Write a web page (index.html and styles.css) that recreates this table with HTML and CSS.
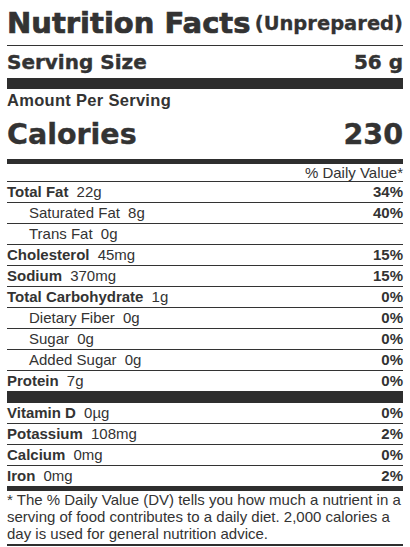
FILE: index.html
```html
<!DOCTYPE html>
<html lang="en">
    <head>
        <meta charset="UTF-8" />
        <title>Nutrition Facts</title>
        <link rel="stylesheet" href="styles.css">
    </head>

    <body>
        <div class="label">
            <header class="title">
                <h1>Nutrition Facts</h1>
                <span class="note">(Unprepared)</span>
            </header>

            <div class="serving">
                <span>Serving Size</span>
                <span>56 g</span>
            </div>

            <div class="amount">Amount Per Serving</div>
            <div class="calories">
                <span>Calories</span>
                <span>230</span>
            </div>

            <div class="dv-head">% Daily Value*</div>

            <div class="row">
                <span><b>Total Fat</b> 22g</span>
                <b>34%</b>
            </div>
            <div class="row sub">
                <span>Saturated Fat <span class="qty">8g</span></span>
                <b>40%</b>
            </div>
            <div class="row sub">
                <span>Trans Fat <span class="qty">0g</span></span>
            </div>
            <div class="row">
                <span><b>Cholesterol</b> 45mg</span>
                <b>15%</b>
            </div>
            <div class="row">
                <span><b>Sodium</b> 370mg</span>
                <b>15%</b>
            </div>
            <div class="row">
                <span><b>Total Carbohydrate</b> 1g</span>
                <b>0%</b>
            </div>
            <div class="row sub">
                <span>Dietary Fiber <span class="qty">0g</span></span>
                <b>0%</b>
            </div>
            <div class="row sub">
                <span>Sugar <span class="qty">0g</span></span>
                <b>0%</b>
            </div>
            <div class="row sub">
                <span>Added Sugar <span class="qty">0g</span></span>
                <b>0%</b>
            </div>
            <div class="row row-thick">
                <span><b>Protein</b> 7g</span>
                <b>0%</b>
            </div>

            <div class="row">
                <span><b>Vitamin D</b> 0µg</span>
                <b>0%</b>
            </div>
            <div class="row">
                <span><b>Potassium</b> 108mg</span>
                <b>2%</b>
            </div>
            <div class="row">
                <span><b>Calcium</b> 0mg</span>
                <b>0%</b>
            </div>
            <div class="row row-medium">
                <span><b>Iron</b> 0mg</span>
                <b>2%</b>
            </div>

            <p class="footnote">
                * The % Daily Value (DV) tells you how much a nutrient in a
                serving of food contributes to a daily diet. 2,000 calories a
                day is used for general nutrition advice.
            </p>
        </div>
    </body>
</html>
```

FILE: styles.css
```css
body {
    margin: 0;
    background-color: #fff;
    color: #333;
    font-family: "Liberation Sans", Arial, sans-serif;
    font-size: 15px;
}

.label {
    width: 396px;
    margin-left: 7px;
}

.title {
    display: flex;
    justify-content: space-between;
    align-items: center;
    padding: 6px 0 5px;
    border-bottom: 1px solid #333;
}

.title h1 {
    margin: 0;
    font-family: "DejaVu Sans", sans-serif;
    font-size: 29px;
    font-weight: bold;
    line-height: 34px;
    -webkit-text-stroke: 0.7px #333;
}

.title .note {
    font-family: "DejaVu Sans", sans-serif;
    font-size: 19.5px;
    font-weight: bold;
    line-height: 23px;
    -webkit-text-stroke: 0.3px #333;
}

.serving,
.calories {
    display: flex;
    justify-content: space-between;
    font-family: "DejaVu Sans", sans-serif;
    font-weight: bold;
    -webkit-text-stroke: 0.4px #333;
}

.serving {
    font-size: 20px;
    line-height: 32px;
    border-bottom: 11px solid #2e2e2e;
}

.amount {
    font-size: 16.5px;
    font-weight: bold;
    letter-spacing: 0.3px;
    line-height: 22px;
}

.calories {
    font-size: 28.5px;
    line-height: 40px;
    padding: 4px 0;
    border-bottom: 5px solid #2e2e2e;
}

.dv-head {
    text-align: right;
    line-height: 17px;
    border-bottom: 1px solid #333;
}

.row {
    display: flex;
    justify-content: space-between;
    line-height: 20px;
    border-bottom: 1px solid #333;
}

.row b {
    margin-right: 4px;
}

.row > b {
    margin-right: 0;
}

.sub {
    padding-left: 22px;
}

.qty {
    margin-left: 4px;
}

.row-thick {
    border-bottom: 12px solid #2e2e2e;
}

.row-medium {
    border-bottom: 5px solid #2e2e2e;
}

.footnote {
    margin: 0;
    padding-bottom: 2px;
    line-height: 17px;
    border-bottom: 2px solid #2e2e2e;
}
```
